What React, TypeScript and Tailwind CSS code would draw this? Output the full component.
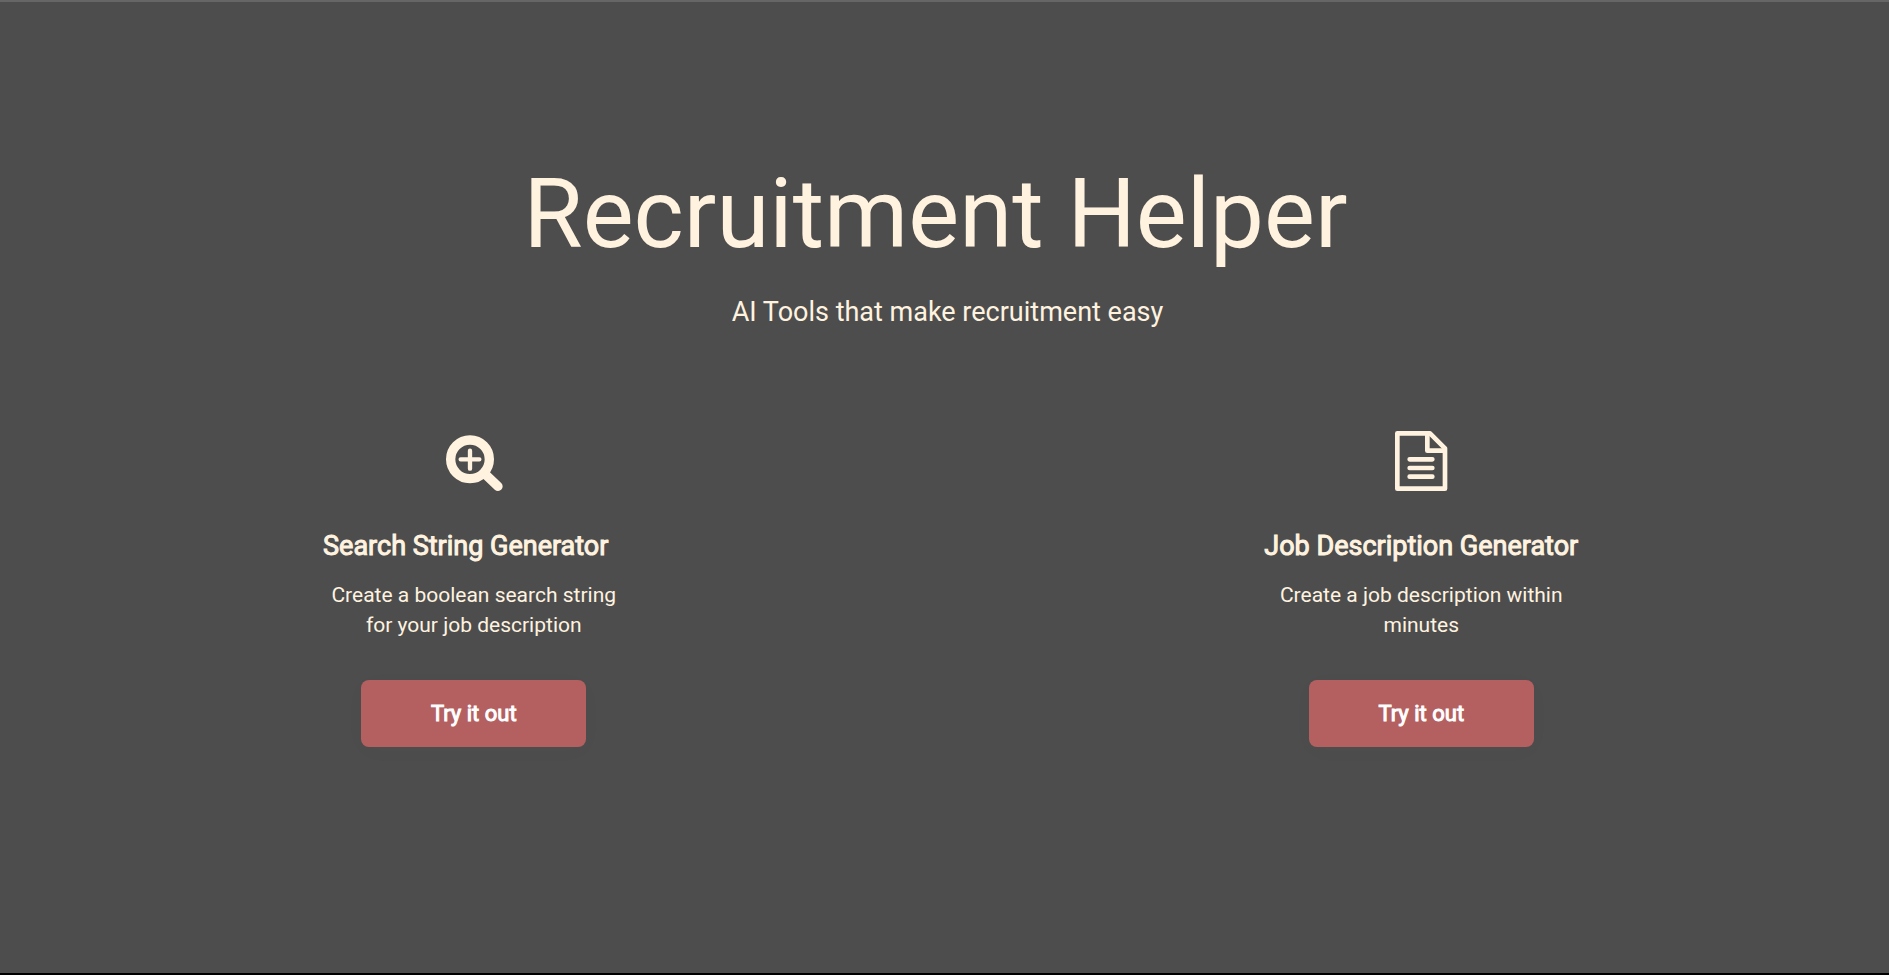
import type { ReactNode } from "react"
import clsx from "clsx"

function SearchIcon() {
  return (
    <svg className="w-[90px] h-20" viewBox="-3 0 270 240" fill="none" stroke="#fff3e0" strokeLinecap="round" aria-hidden="true">
      <circle cx="120" cy="118" r="58" strokeWidth="28" />
      <path d="M120 92V146M92 118H148" strokeWidth="13" />
      <path d="M163 160L204 199" strokeWidth="28" />
    </svg>
  )
}

function DocumentIcon() {
  return (
    <svg className="w-[90px] h-20" viewBox="-12 0 270 240" fill="none" stroke="#fff3e0" strokeLinecap="round" strokeLinejoin="round" aria-hidden="true">
      <path d="M52 40H150L195 85V206H52Z" strokeWidth="14" />
      <path d="M142 42V92H193" strokeWidth="14" />
      <path d="M89 118H157M89 144H157M89 170H157" strokeWidth="14" />
    </svg>
  )
}

type ToolProps = {
  icon: ReactNode
  title: string
  titleClassName?: string
  description: string
}

function Tool({ icon, title, titleClassName, description }: ToolProps) {
  return (
    <section className="flex flex-col items-center text-center">
      {icon}
      <h2 className={clsx("mt-[26px] text-[27px] leading-10 [-webkit-text-stroke:1px]", titleClassName)}>
        {title}
      </h2>
      <p className="mt-3.5 w-[300px] text-[21px] leading-[30px]">{description}</p>
      <button
        type="button"
        className="mt-10 w-[225px] h-[67px] rounded-lg bg-[#b56060] text-[22px] text-white shadow-[0_4px_24px_rgba(181,96,96,0.02)] [-webkit-text-stroke:1px]"
      >
        Try it out
      </button>
    </section>
  )
}

export default function App() {
  return (
    <main className="min-h-screen border-t-2 border-t-[#666666] border-b-2 border-b-black bg-[#4d4d4d] pl-1.5 pt-40 font-[Roboto,sans-serif] text-[#fff3e0]">
      <header className="text-center">
        <h1 className="mr-6 text-8xl leading-[104px]">Recruitment Helper</h1>
        <p className="mt-[26px] text-[27px] leading-10">AI Tools that make recruitment easy</p>
      </header>

      <div className="mt-[88px] grid grid-cols-2 gap-3">
        <Tool
          icon={<SearchIcon />}
          title="Search String Generator"
          titleClassName="mr-4"
          description="Create a boolean search string for your job description"
        />
        <Tool
          icon={<DocumentIcon />}
          title="Job Description Generator"
          description="Create a job description within minutes"
        />
      </div>
    </main>
  )
}
